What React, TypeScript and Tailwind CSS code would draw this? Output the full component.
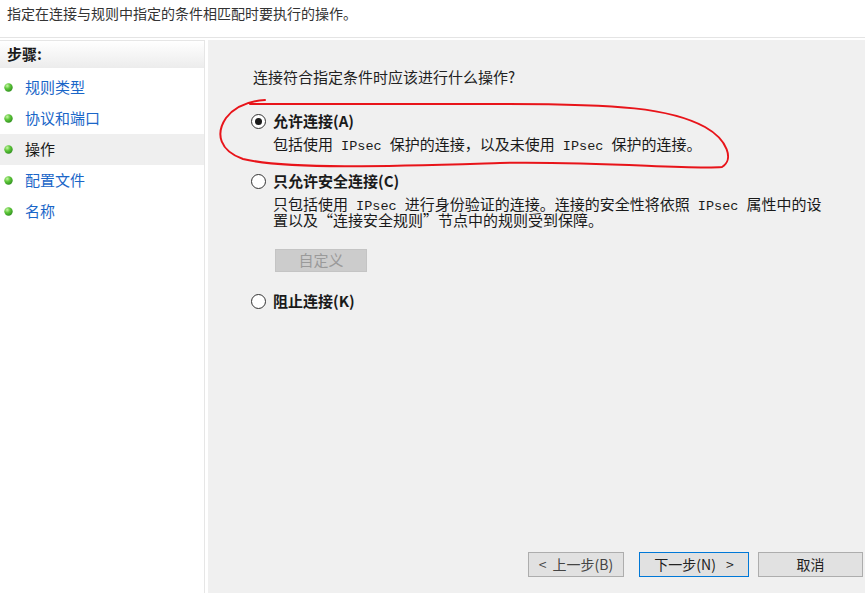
import React from 'react';

const cjk = "font-['Noto_Sans_CJK_SC',sans-serif]";

function Bullet() {
  return (
    <svg width="9" height="9" viewBox="0 0 9 9" className="shrink-0">
      <defs>
        <radialGradient id="bul" cx="0.35" cy="0.3" r="0.75">
          <stop offset="0" stopColor="#c8f5a8" />
          <stop offset="0.45" stopColor="#5fc83a" />
          <stop offset="1" stopColor="#2f8f1f" />
        </radialGradient>
      </defs>
      <circle cx="4.5" cy="4.5" r="4.2" fill="url(#bul)" />
    </svg>
  );
}

function Radio({ checked }: { checked?: boolean }) {
  return (
    <span className="w-[15px] h-[15px] shrink-0 rounded-full border border-[#333] bg-white flex items-center justify-center">
      {checked && <span className="w-[7px] h-[7px] rounded-full bg-[#1a1a1a]" />}
    </span>
  );
}

// latin bits in the descriptions are drawn in a fixed-width face
function M({ children }: { children: React.ReactNode }) {
  return (
    <span className="inline-block font-['Liberation_Mono',monospace] text-[13.5px] leading-[16px] whitespace-pre">
      {children}
    </span>
  );
}

const steps = [
  { label: '规则类型' },
  { label: '协议和端口' },
  { label: '操作', active: true },
  { label: '配置文件' },
  { label: '名称' },
];

export default function App() {
  return (
    <div className={`relative w-[865px] h-[594px] overflow-hidden bg-white text-[#1a1a1a] ${cjk}`}>
      <div className="h-[38px] border-b border-[#e4e4e4] pl-[7px] pt-[3px] text-[14px] leading-[20px] text-[#333]">
        指定在连接与规则中指定的条件相匹配时要执行的操作。
      </div>

      <div className="flex h-[553px] mt-[2px]">
        <div className="w-[205px] border-r border-t border-[#e6e6e6] bg-white">
          <div className="h-[27px] flex items-center pl-[7px] text-[15px] font-bold bg-gradient-to-b from-white to-[#ececec]">
            步骤:
          </div>
          <div className="pt-[4px]">
            {steps.map(s => (
              <div
                key={s.label}
                className={`h-[31px] flex items-center pl-[4px] gap-[12px] text-[15px] ${
                  s.active ? 'bg-[#efefef] text-[#1a1a1a]' : 'text-[#1a66c8]'
                }`}
              >
                <Bullet />
                <span>{s.label}</span>
              </div>
            ))}
          </div>
        </div>

        <div className="ml-[3px] flex-1 bg-[#f0f0f0] flex flex-col pl-[43px] pt-[27px] pb-[16px] pr-[2px]">
          <div className="ml-[2px] text-[15px] leading-[20px] text-[#222]">连接符合指定条件时应该进行什么操作?</div>

          <div className="mt-[24px] flex items-center gap-[7px] h-[20px]">
            <Radio checked />
            <span className="text-[15px] font-bold">允许连接(A)</span>
          </div>
          <div className="ml-[22px] mt-[3px] h-[20px] text-[15px] leading-[20px] whitespace-nowrap">
            包括使用<M> IPsec </M>保护的连接，以及未使用<M> IPsec </M>保护的连接。
          </div>

          <div className="mt-[17px] flex items-center gap-[7px] h-[20px]">
            <Radio />
            <span className="text-[15px] font-bold">只允许安全连接(C)</span>
          </div>
          <div className="ml-[22px] mt-[5px] text-[15px] whitespace-nowrap">
            <div className="h-[16px] leading-[16px]">
              只包括使用<M> IPsec </M>进行身份验证的连接。连接的安全性将依照<M> IPsec </M>属性中的设
            </div>
            <div className="h-[16px] leading-[16px]">置以及“连接安全规则”节点中的规则受到保障。</div>
          </div>
          <div className="ml-[24px] mt-[21px] w-[92px] h-[23px] border border-[#c4c4c4] bg-[#cccccc] text-[#9a9a9a] text-[15px] flex items-center justify-center">
            自定义
          </div>

          <div className="mt-[19px] flex items-center gap-[7px] h-[20px]">
            <Radio />
            <span className="text-[15px] font-bold">阻止连接(K)</span>
          </div>

          <div className="mt-auto flex justify-end text-[14px]">
            <div className="w-[96px] h-[25px] border border-[#adadad] bg-[#e1e1e1] text-[#444] flex items-center justify-center gap-[6px]">
              <span>&lt;</span>
              <span>上一步(B)</span>
            </div>
            <div className="ml-[15px] w-[110px] h-[25px] border border-[#0078d7] bg-[#e1e1e1] text-[#222] flex items-center justify-center gap-[10px]">
              <span>下一步(N)</span>
              <span>&gt;</span>
            </div>
            <div className="ml-[9px] w-[105px] h-[25px] border border-[#adadad] bg-[#e1e1e1] text-[#222] flex items-center justify-center">
              取消
            </div>
          </div>
        </div>
      </div>

      {/* hand-drawn red mark around the first option */}
      <svg className="absolute left-0 top-0 pointer-events-none" width="865" height="594">
        <path
          d="M 265 100 C 250 101, 236 105, 226 118 C 215 134, 220 151, 243 159 C 290 170, 400 166, 500 163 C 600 161, 690 170, 722 167 C 734 160, 728 140, 705 127 C 670 108, 620 104, 500 104 C 400 104, 300 104, 250 104"
          fill="none"
          stroke="#e8141a"
          strokeWidth="2"
          strokeLinecap="round"
        />
      </svg>
    </div>
  );
}
